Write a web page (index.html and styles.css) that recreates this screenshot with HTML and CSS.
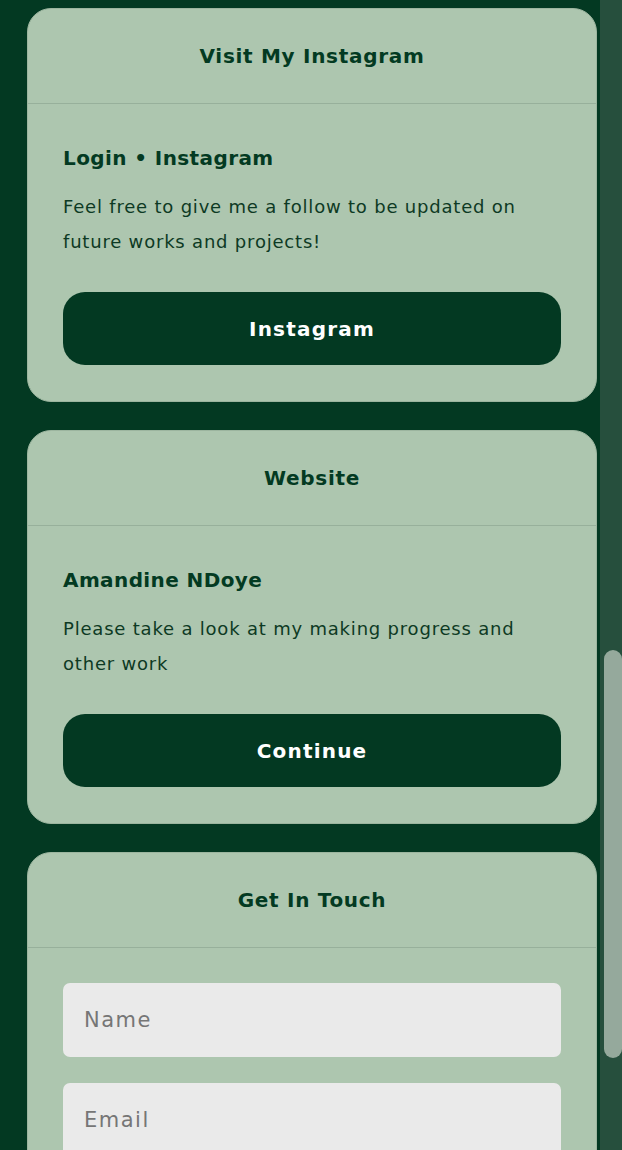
FILE: index.html
```html
<!DOCTYPE html>
<html lang="en">
<head>
<meta charset="utf-8">
<title>Links</title>
<link rel="stylesheet" href="styles.css">
</head>
<body class="page">
  <main class="feed">
    <section class="card">
      <header class="card-head"><h2 class="card-title">Visit My Instagram</h2></header>
      <div class="card-body">
        <h3 class="item-title">Login • Instagram</h3>
        <p class="item-text">Feel free to give me a follow to be updated on future works and projects!</p>
        <a class="btn" href="#">Instagram</a>
      </div>
    </section>
    <section class="card">
      <header class="card-head"><h2 class="card-title">Website</h2></header>
      <div class="card-body">
        <h3 class="item-title">Amandine NDoye</h3>
        <p class="item-text">Please take a look at my making progress and other work</p>
        <a class="btn" href="#">Continue</a>
      </div>
    </section>
    <section class="card">
      <header class="card-head"><h2 class="card-title">Get In Touch</h2></header>
      <form class="card-body form">
        <input class="field" type="text" placeholder="Name">
        <input class="field" type="email" placeholder="Email">
      </form>
    </section>
  </main>
  <div class="scrollbar"><div class="thumb"></div></div>
</body>
</html>
```
FILE: styles.css
```css
* { box-sizing: border-box; }
html, body { margin: 0; padding: 0; }
.page {
  display: flex;
  width: 622px;
  height: 1150px;
  overflow: hidden;
  background: #033922;
  font-family: "DejaVu Sans", "Noto Sans", sans-serif;
  color: #033a22;
}
.feed {
  width: 600px;
  flex: none;
  display: flex;
  flex-direction: column;
  gap: 28px;
  padding: 8px 0 0 27px;
}
.card {
  width: 570px;
  flex: none;
  background: #adc6af;
  border: 1px solid #9cb59f;
  border-radius: 24px;
}
.card-head {
  height: 95px;
  display: flex;
  align-items: center;
  justify-content: center;
  border-bottom: 1px solid #97b09b;
}
.card-title {
  margin: 0;
  font-size: 20px;
  font-weight: 700;
  letter-spacing: 0.7px;
}
.card-body {
  padding: 35px 35px 36px;
  display: flex;
  flex-direction: column;
}
.item-title {
  margin: 0;
  font-size: 20px;
  font-weight: 700;
  line-height: 38px;
  letter-spacing: 0.4px;
}
.item-text {
  margin: 12px 0 0;
  font-size: 18px;
  line-height: 35px;
  color: #0d3a24;
  letter-spacing: 0.8px;
}
.btn {
  margin-top: 33px;
  height: 73px;
  border: none;
  border-radius: 22px;
  background: #033922;
  color: #ffffff;
  font-family: inherit;
  font-size: 20px;
  font-weight: 700;
  letter-spacing: 1.2px;
  text-decoration: none;
  display: flex;
  align-items: center;
  justify-content: center;
}
.form { gap: 26px; padding-bottom: 140px; }
.field {
  height: 74px;
  border: none;
  border-radius: 7px;
  background: #eaeaea;
  padding: 0 21px;
  font-family: inherit;
  font-size: 21px;
  letter-spacing: 1.5px;
  color: #333;
}
.field::placeholder { color: #767676; }
.scrollbar {
  width: 22px;
  flex: none;
  background: #264f3d;
  padding: 650px 0 0 4px;
}
.thumb {
  width: 18px;
  height: 408px;
  border-radius: 9px;
  background: #95a99c;
}
```
